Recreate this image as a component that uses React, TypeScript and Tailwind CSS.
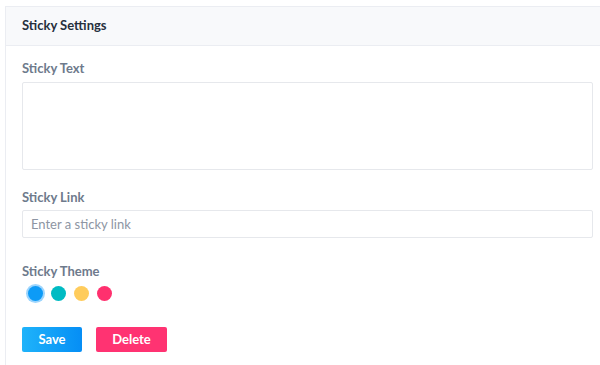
import React from "react";

export default function App() {
  const font = { fontFamily: "Lato, 'Noto Sans', sans-serif" };
  return (
    <div className="w-[600px] h-[365px] overflow-hidden bg-white pt-[6px] pl-[5px]" style={font}>
      <div className="w-[610px] h-[400px] border border-[#ebedf2] bg-white">
        <div className="h-[39px] bg-[#f8f9fb] border-b border-[#ebedf2] flex items-center px-[16px]">
          <span className="text-[13px] font-bold text-[#262f3d]">Sticky Settings</span>
        </div>
        <div className="pl-[16px] pr-[16px] pt-[13px] flex flex-col w-[604px]">
          <label className="text-[13px] leading-[18px] font-bold text-[#6e7a8c] mb-[5px]">Sticky Text</label>
          <textarea className="w-[571px] h-[88px] border border-[#e6e8ec] rounded-[2px] resize-none outline-none" />
          <label className="text-[13px] leading-[18px] font-bold text-[#6e7a8c] mt-[18px] mb-[4px]">Sticky Link</label>
          <input
            className="w-[571px] h-[28px] border border-[#e6e8ec] rounded-[2px] px-[8px] text-[13px] text-[#333] placeholder:text-[#8d95a3] outline-none"
            style={font}
            placeholder="Enter a sticky link"
          />
          <label className="text-[13px] leading-[18px] font-bold text-[#6e7a8c] mt-[24px]">Sticky Theme</label>
          <div className="flex items-center gap-[8px] mt-[6px] pl-[6px]">
            <span className="w-[15px] h-[15px] rounded-full bg-[#0d9bf7] ring-2 ring-[#9dd5fd]" />
            <span className="w-[15px] h-[15px] rounded-full bg-[#00bbc3]" />
            <span className="w-[15px] h-[15px] rounded-full bg-[#ffcc5c]" />
            <span className="w-[15px] h-[15px] rounded-full bg-[#ff306e]" />
          </div>
          <div className="flex gap-[14px] mt-[26px]">
            <button className="w-[60px] h-[25px] rounded-[2px] bg-gradient-to-r from-[#1fb3fa] to-[#068ef5] text-white text-[13px] font-bold" style={font}>
              Save
            </button>
            <button className="w-[71px] h-[25px] rounded-[2px] bg-[#ff3372] text-white text-[13px] font-bold" style={font}>
              Delete
            </button>
          </div>
        </div>
      </div>
    </div>
  );
}
